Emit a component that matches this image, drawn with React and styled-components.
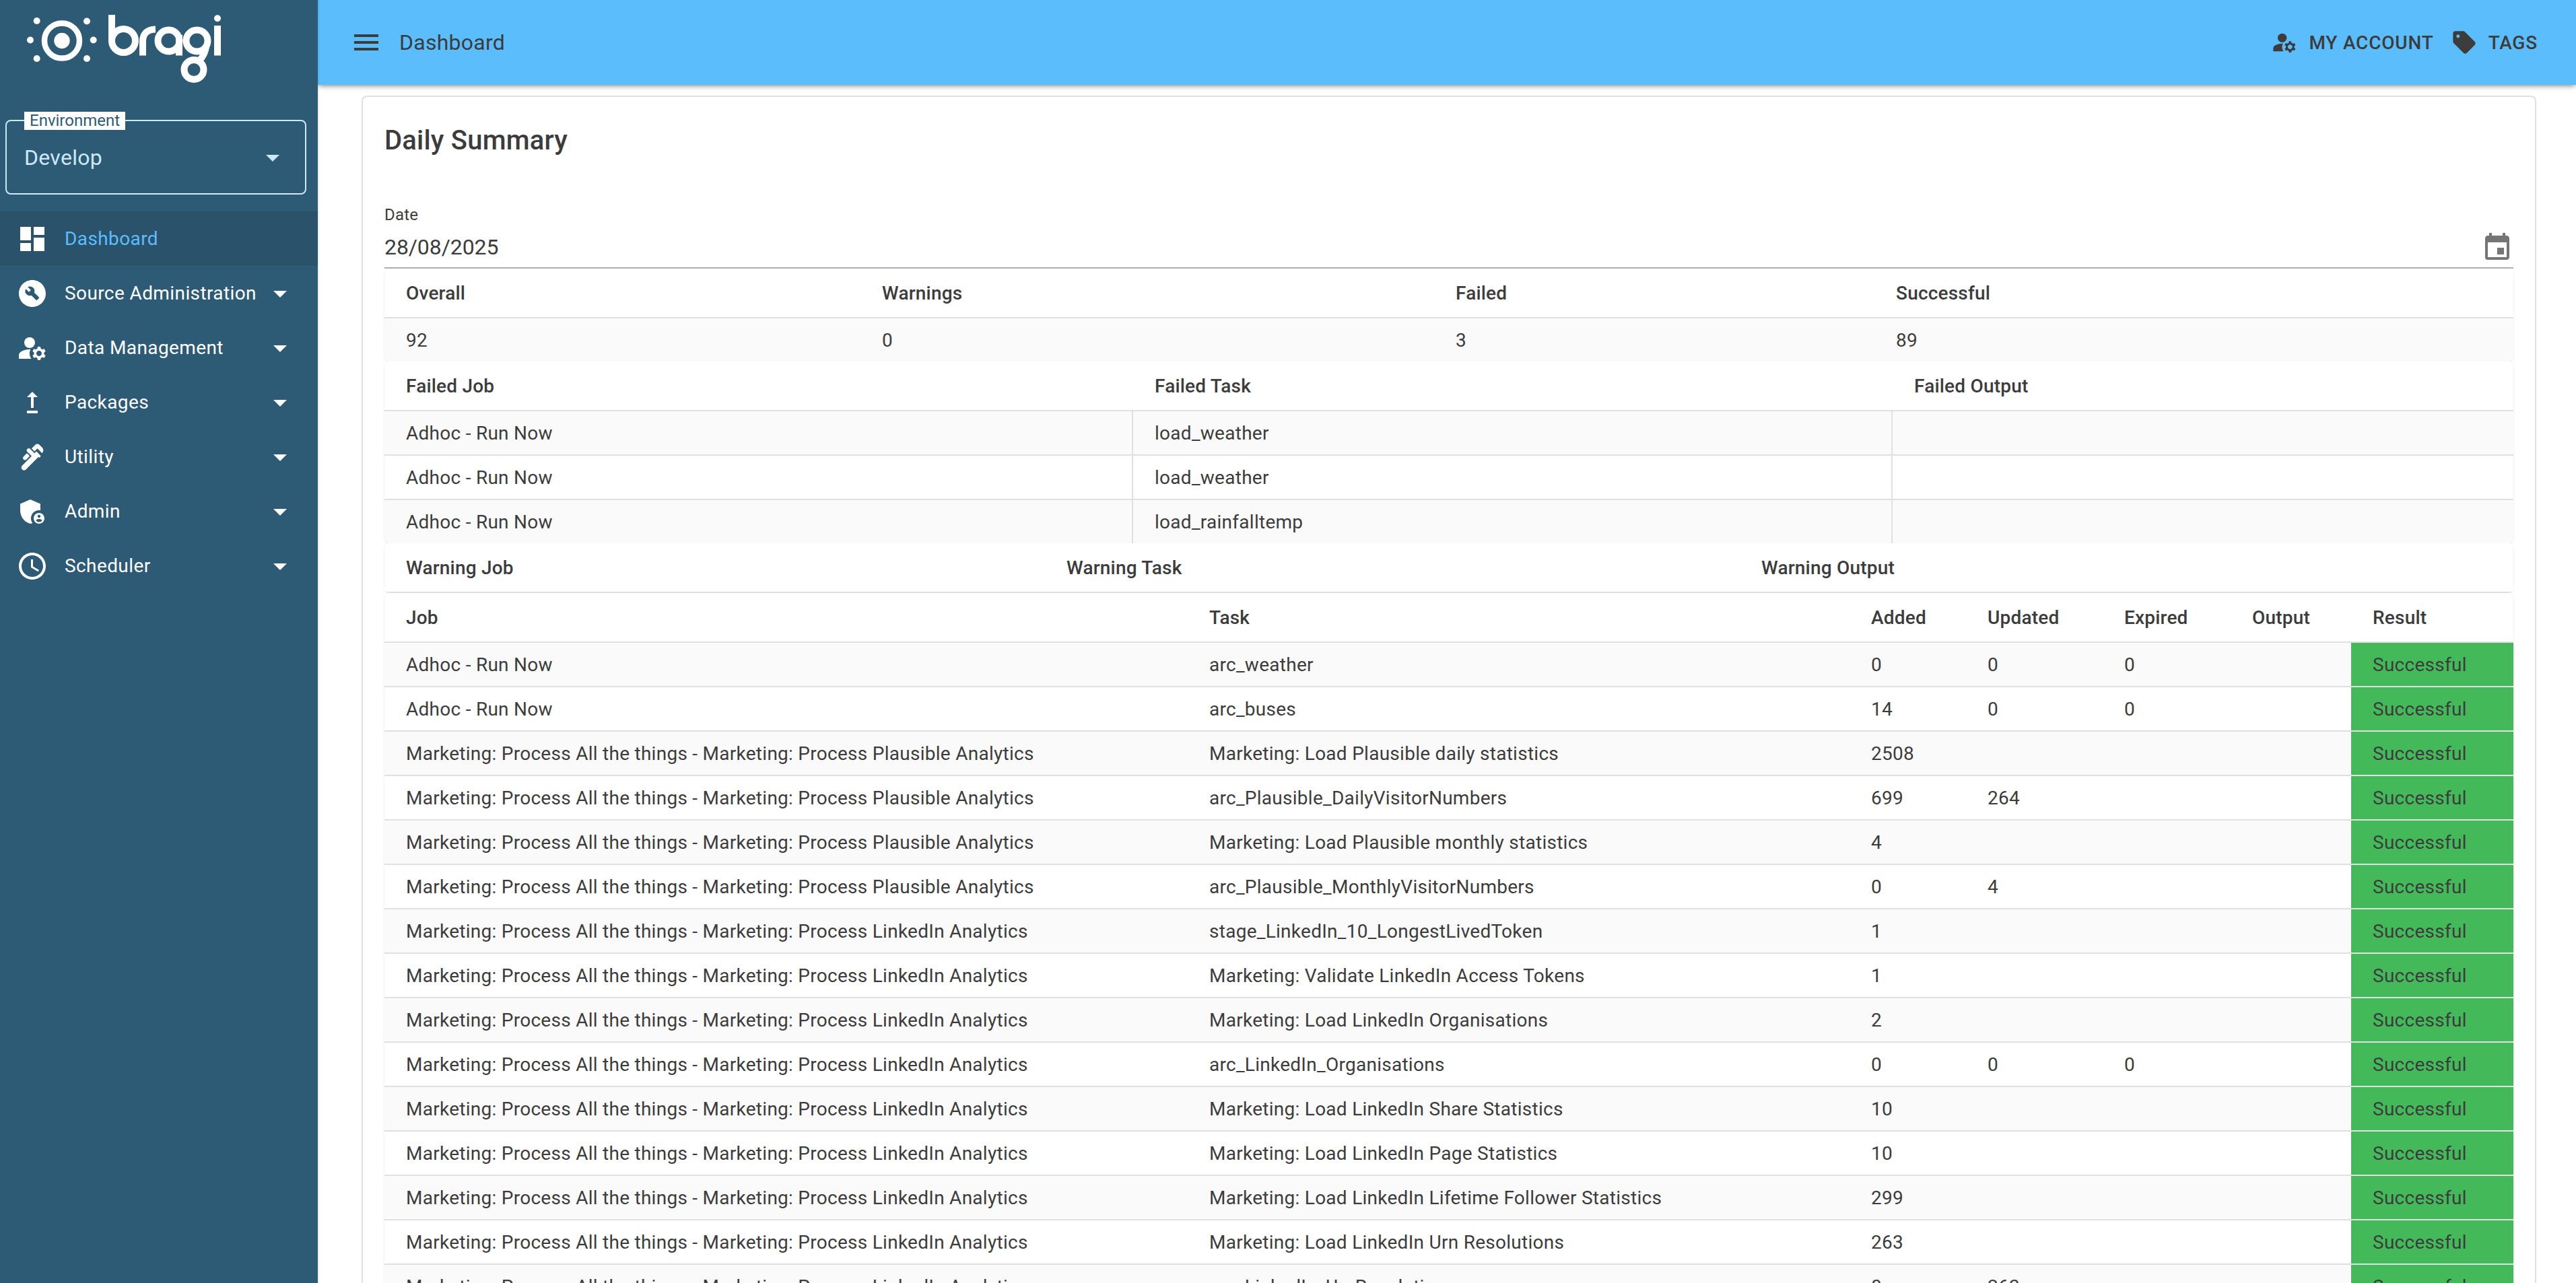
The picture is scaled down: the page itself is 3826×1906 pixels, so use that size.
import React from "react";
import styled, { createGlobalStyle } from "styled-components";
import {
  MdMenu, MdDashboard, MdBuildCircle, MdManageAccounts, MdUpgrade, MdPlumbing,
  MdAdminPanelSettings, MdAccessTime, MdArrowDropDown, MdEvent, MdSell,
} from "react-icons/md";

const INK = "#3c3c3c";
const RULE = "#e0e0e0";
const NAVY = "#2d5a74";
const SKY = "#5bbdfb";

const Global = createGlobalStyle`
  html, body { margin: 0; padding: 0; height: 100%; overflow: hidden; background: #fff; }
  * { box-sizing: border-box; }
  body { font-family: Roboto, "Liberation Sans", sans-serif; color: ${INK}; }
`;

const Shell = styled.div`display: flex; width: 100%; height: 100vh; overflow: hidden;`;

const Sidebar = styled.aside`
  width: 472px; flex: none; height: 100%; background: ${NAVY};
  display: flex; flex-direction: column;
  box-shadow: 1px 0 3px rgba(0,0,0,.12);
  z-index: 2;
`;
const LogoBlock = styled.div`height: 166px; padding: 0; flex: none;`;
const LogoSvg = styled.svg`display: block; width: 472px; height: 126px;`;

const EnvBox = styled.div`
  position: relative; margin: 12px 17px 0 8px; height: 111px; flex: none;
  border: 2px solid #cbe9fb; border-radius: 8px;
  display: flex; align-items: center; justify-content: space-between;
  padding: 0 24px 0 26px; color: #cbe9fb;
`;
const EnvLabel = styled.span`
  position: absolute; left: 26px; top: -14px; height: 27px; padding: 0 8px;
  background: #fff; color: ${NAVY}; font-size: 24px; line-height: 27px;
`;
const EnvValue = styled.span`font-size: 32px; letter-spacing: .3px;`;
const EnvArrow = styled(MdArrowDropDown)`font-size: 48px; flex: none;`;

const Nav = styled.nav`display: flex; flex-direction: column; margin-top: 25px;`;
const NavItem = styled.div`
  height: 81px; display: flex; align-items: center; padding: 0 32px 0 24px;
  background: ${p => (p.$active ? "#2b526b" : "transparent")};
  color: ${p => (p.$active ? SKY : "#fff")};
`;
const NavIcon = styled.span`
  width: 48px; height: 48px; flex: none; color: #fff; margin-right: 24px;
  font-size: 48px; display: block; line-height: 0;
`;
const NavText = styled.span`flex: 1; font-size: 28px; font-weight: 400; letter-spacing: .4px; white-space: nowrap;`;
const NavArrow = styled(MdArrowDropDown)`font-size: 48px; flex: none; color: #fff;`;

const Main = styled.div`flex: 1; min-width: 0; display: flex; flex-direction: column; height: 100%;`;

const Header = styled.header`
  height: 126px; flex: none; background: ${SKY}; position: relative; z-index: 1;
  display: flex; align-items: center; padding: 0 57px 0 48px;
  box-shadow: 0 4px 8px -2px rgba(0,0,0,.35), 0 2px 4px rgba(0,0,0,.12);
  color: ${INK};
`;
const MenuIcon = styled(MdMenu)`font-size: 48px; flex: none; margin-right: 25px;`;
const HeaderTitle = styled.div`flex: 1; font-size: 32px; letter-spacing: .25px;`;
const HeaderButton = styled.div`display: flex; align-items: center; gap: 16px; margin-left: 25px;`;
const HeaderButtonIcon = styled.span`font-size: 40px; line-height: 0; display: block;`;
const HeaderButtonText = styled.span`font-size: 28px; font-weight: 500; letter-spacing: .8px; text-transform: uppercase;`;

const Content = styled.main`flex: 1; min-height: 0; padding: 16px 59px 0 65px; overflow: hidden;`;
const Card = styled.section`
  border: 2px solid ${RULE}; border-bottom: 0; border-radius: 8px 8px 0 0;
  padding: 33px 32px 0 32px; background: #fff; min-height: 100%;
`;
const Title = styled.h1`margin: 0; font-size: 40px; line-height: 64px; font-weight: 500; letter-spacing: .2px;`;
const FieldLabel = styled.div`margin-top: 64px; font-size: 24px; line-height: 28px; letter-spacing: .2px;`;
const FieldRow = styled.div`
  margin-top: 11px; display: flex; align-items: flex-start; justify-content: space-between;
  height: 55px; border-bottom: 2px solid #b0b0b0;
`;
const FieldValue = styled.span`font-size: 32px; line-height: 46px; letter-spacing: -.1px;`;
const FieldIcon = styled(MdEvent)`font-size: 48px; color: #757575; flex: none;`;

const Sheet = styled.div`
  border-radius: 8px; overflow: hidden; background: #fff;
  box-shadow: 0 1px 3px rgba(0,0,0,.1);
`;
const Table = styled.table`width: 100%; border-collapse: separate; border-spacing: 0; table-layout: fixed;`;
const Col = styled.col`width: ${p => p.$w}px;`;
const Th = styled.th`
  height: 74px; padding: 0 32px; text-align: left; font-size: 28px; font-weight: 500;
  letter-spacing: .2px; border-bottom: 2px solid ${RULE}; white-space: nowrap; background: #fff;
`;
const Row = styled.tr`background: ${p => (p.$shade ? "#fafafa" : "#fff")};`;
const Td = styled.td`
  height: ${p => (p.$last ? 64 : 66)}px; padding: 1px 32px 0; font-size: 28px; letter-spacing: .27px; white-space: nowrap;
  border-bottom: ${p => (p.$last ? "0" : `2px solid ${RULE}`)};
  border-right: ${p => (p.$rule ? `2px solid ${RULE}` : "0")};
`;
const ResultTd = styled(Td)`background: #44b95a;`;

const Logo = () => (
  <LogoSvg viewBox="0 0 472 126" role="img" aria-label="bragi">
    <g fill="#fff">
      <circle cx="92" cy="60.5" r="11.7" />
      <circle cx="54.7" cy="31" r="5" /><circle cx="129" cy="31.5" r="5" />
      <circle cx="45" cy="59.5" r="5" /><circle cx="138.7" cy="59.5" r="5" />
      <circle cx="54.7" cy="87" r="5" /><circle cx="129" cy="87" r="5" />
      <circle cx="323" cy="27.3" r="5" />
    </g>
    <g fill="none" stroke="#fff" strokeWidth="8.5">
      <circle cx="92" cy="60.5" r="26" />
    </g>
    <g fill="none" stroke="#fff" strokeWidth="10">
      <path d="M166 22V60.5" />
      <circle cx="183.5" cy="60.5" r="17.5" />
      <path d="M212 82.5V62Q212 44 231 43.5" />
      <circle cx="250.5" cy="60.5" r="16" />
      <path d="M266 52V82.5" />
      <circle cx="292.5" cy="60.5" r="16" />
      <path d="M323 38V82.5" />
      <circle cx="288" cy="103.5" r="14.5" />
      <path d="M306 70Q304 82 296 90" />
    </g>
  </LogoSvg>
);

const navItems = [
  { label: "Source Administration", Icon: MdBuildCircle },
  { label: "Data Management", Icon: MdManageAccounts },
  { label: "Packages", Icon: MdUpgrade },
  { label: "Utility", Icon: MdPlumbing },
  { label: "Admin", Icon: MdAdminPanelSettings },
  { label: "Scheduler", Icon: MdAccessTime },
];

const P = "Marketing: Process All the things - Marketing: Process Plausible Analytics";
const L = "Marketing: Process All the things - Marketing: Process LinkedIn Analytics";
const A = "Adhoc - Run Now";
const jobs = [
  [A, "arc_weather", "0", "0", "0"],
  [A, "arc_buses", "14", "0", "0"],
  [P, "Marketing: Load Plausible daily statistics", "2508", "", ""],
  [P, "arc_Plausible_DailyVisitorNumbers", "699", "264", ""],
  [P, "Marketing: Load Plausible monthly statistics", "4", "", ""],
  [P, "arc_Plausible_MonthlyVisitorNumbers", "0", "4", ""],
  [L, "stage_LinkedIn_10_LongestLivedToken", "1", "", ""],
  [L, "Marketing: Validate LinkedIn Access Tokens", "1", "", ""],
  [L, "Marketing: Load LinkedIn Organisations", "2", "", ""],
  [L, "arc_LinkedIn_Organisations", "0", "0", "0"],
  [L, "Marketing: Load LinkedIn Share Statistics", "10", "", ""],
  [L, "Marketing: Load LinkedIn Page Statistics", "10", "", ""],
  [L, "Marketing: Load LinkedIn Lifetime Follower Statistics", "299", "", ""],
  [L, "Marketing: Load LinkedIn Urn Resolutions", "263", "", ""],
  [L, "arc_LinkedIn_UrnResolutions", "0", "263", ""],
];
const failed = [
  [A, "load_weather"],
  [A, "load_weather"],
  [A, "load_rainfalltemp"],
];

const Cols = ({ widths }) => (
  <colgroup>{widths.map((w, i) => <Col key={i} $w={w} />)}</colgroup>
);

export default function App() {
  return (
    <>
      <Global />
      <Shell>
        <Sidebar>
          <LogoBlock><Logo /></LogoBlock>
          <EnvBox>
            <EnvLabel>Environment</EnvLabel>
            <EnvValue>Develop</EnvValue>
            <EnvArrow />
          </EnvBox>
          <Nav>
            <NavItem $active>
              <NavIcon><MdDashboard /></NavIcon>
              <NavText>Dashboard</NavText>
            </NavItem>
            {navItems.map(({ label, Icon }) => (
              <NavItem key={label}>
                <NavIcon><Icon /></NavIcon>
                <NavText>{label}</NavText>
                <NavArrow />
              </NavItem>
            ))}
          </Nav>
        </Sidebar>
        <Main>
          <Header>
            <MenuIcon />
            <HeaderTitle>Dashboard</HeaderTitle>
            <HeaderButton>
              <HeaderButtonIcon><MdManageAccounts /></HeaderButtonIcon>
              <HeaderButtonText>My Account</HeaderButtonText>
            </HeaderButton>
            <HeaderButton>
              <HeaderButtonIcon><MdSell /></HeaderButtonIcon>
              <HeaderButtonText>Tags</HeaderButtonText>
            </HeaderButton>
          </Header>
          <Content>
            <Card>
              <Title>Daily Summary</Title>
              <FieldLabel>Date</FieldLabel>
              <FieldRow>
                <FieldValue>28/08/2025</FieldValue>
                <FieldIcon />
              </FieldRow>
              <Sheet>
                <Table>
                  <Cols widths={[707, 852, 654, 950]} />
                  <thead><tr><Th>Overall</Th><Th>Warnings</Th><Th>Failed</Th><Th>Successful</Th></tr></thead>
                  <tbody>
                    <Row $shade><Td $last>92</Td><Td $last>0</Td><Td $last>3</Td><Td $last>89</Td></Row>
                  </tbody>
                </Table>
              </Sheet>
              <Sheet>
                <Table>
                  <Cols widths={[1112, 1128, 923]} />
                  <thead><tr><Th>Failed Job</Th><Th>Failed Task</Th><Th>Failed Output</Th></tr></thead>
                  <tbody>
                    {failed.map((r, i) => {
                      const last = i === failed.length - 1;
                      return (
                        <Row key={i} $shade={i % 2 === 0}>
                          <Td $last={last} $rule>{r[0]}</Td>
                          <Td $last={last} $rule>{r[1]}</Td>
                          <Td $last={last} />
                        </Row>
                      );
                    })}
                  </tbody>
                </Table>
              </Sheet>
              <Sheet>
                <Table>
                  <Cols widths={[981, 1032, 1150]} />
                  <thead><tr><Th>Warning Job</Th><Th>Warning Task</Th><Th>Warning Output</Th></tr></thead>
                </Table>
              </Sheet>
              <Sheet>
                <Table>
                  <Cols widths={[1193, 983, 173, 203, 190, 179, 242]} />
                  <thead>
                    <tr>
                      <Th>Job</Th><Th>Task</Th><Th>Added</Th><Th>Updated</Th>
                      <Th>Expired</Th><Th>Output</Th><Th>Result</Th>
                    </tr>
                  </thead>
                  <tbody>
                    {jobs.map((r, i) => (
                      <Row key={i} $shade={i % 2 === 0}>
                        {r.map((c, j) => <Td key={j}>{c}</Td>)}
                        <Td />
                        <ResultTd>Successful</ResultTd>
                      </Row>
                    ))}
                  </tbody>
                </Table>
              </Sheet>
            </Card>
          </Content>
        </Main>
      </Shell>
    </>
  );
}
